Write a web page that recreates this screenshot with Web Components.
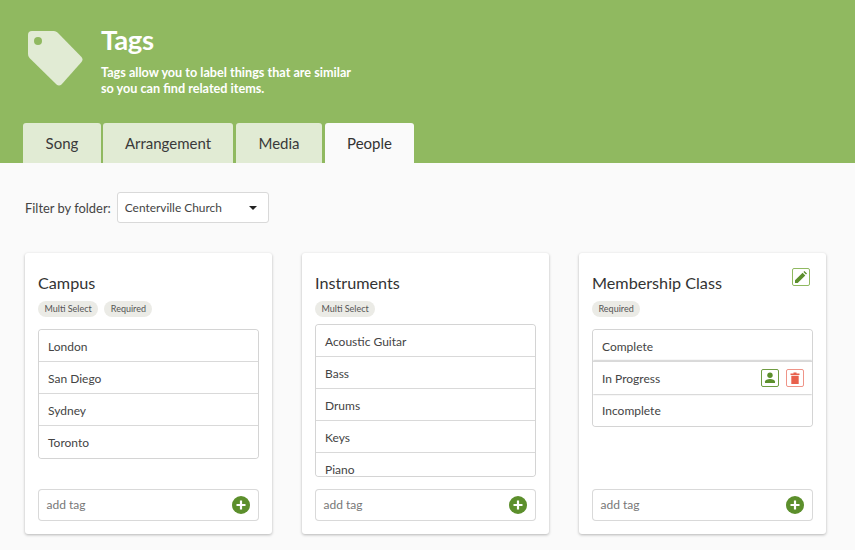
<!DOCTYPE html>
<html>
<head>
<meta charset="utf-8">
<style>
  html, body { margin: 0; padding: 0; height: 550px; overflow: hidden; background: #fafafa; font-family: Lato, sans-serif; color: #333; }
</style>
</head>
<body>
<tags-page></tags-page>
<script>
// Banner com icone, titulo e abas
class TagsHeader extends HTMLElement {
  constructor() {
    super();
    this.shadow = this.attachShadow({ mode: 'open' });
  }
  connectedCallback() {
    this.shadow.innerHTML = `
      <style>
        :host { display: block; height: 163px; background: #90b960; box-sizing: border-box; padding: 24px 0 0 23px; }
        .top { display: flex; height: 99px; align-items: flex-start; }
        svg { width: 55px; height: 55px; margin: 7px 0 0 5px; flex: none; }
        .text { margin-left: 18px; color: #fff; }
        h1 { margin: 0; font-size: 27.5px; line-height: 32px; font-weight: 700; letter-spacing: -.3px; }
        p { margin: 9px 0 0; font-size: 12.65px; line-height: 15.7px; font-weight: 700; }
        .tabs { display: flex; }
        tag-tab + tag-tab { margin-left: 3px; }
        tag-tab:nth-child(2) { margin-left: 2px; }
      </style>
      <div class="top">
        <svg viewBox="0 0 55 55"><path fill="#e1ebd4" d="M4 0H26Q28 0 29.5 1.5L53.5 26Q55.5 28.5 53.5 31L33.5 53.5Q31 55.5 28.5 53.5L1.5 27Q0 25.5 0 23V4Q0 0 4 0z"/><circle cx="10" cy="10" r="4" fill="#90b960"/></svg>
        <div class="text">
          <h1>Tags</h1>
          <p>Tags allow you to label things that are similar<br>so you can find related items.</p>
        </div>
      </div>
      <div class="tabs">
        <tag-tab style="width:78px">Song</tag-tab>
        <tag-tab style="width:130px">Arrangement</tag-tab>
        <tag-tab style="width:86px">Media</tag-tab>
        <tag-tab active style="width:89px">People</tag-tab>
      </div>`;
  }
}

class TagTab extends HTMLElement {
  constructor() {
    super();
    this.attachShadow({ mode: 'open' }).innerHTML = `
      <style>
        :host { display: flex; height: 40px; align-items: center; justify-content: center; background: #e1ebd4; color: #3a3a3a; border-radius: 3px 3px 0 0; font-size: 15px; }
        :host([active]) { background: #fafafa; color: #333; }
      </style>
      <slot></slot>`;
  }
}

class FolderFilter extends HTMLElement {
  constructor() {
    super();
    this.attachShadow({ mode: 'open' }).innerHTML = `
      <style>
        :host { display: flex; align-items: center; height: 31px; font-size: 12.9px; color: #444; }
        .select { margin-left: 6px; width: 152px; height: 31px; box-sizing: border-box; background: #fff; border: 1px solid #d9d9d9; border-radius: 3px; display: flex; align-items: center; justify-content: space-between; padding: 0 11px 0 7px; font-size: 11.9px; }
        i { width: 0; height: 0; border: 4px solid transparent; border-top-color: #222; border-bottom: 0; }
      </style>
      <span>Filter by folder:</span>
      <div class="select"><span>Centerville Church</span><i></i></div>`;
  }
}

// Cartao de um grupo de tags
class TagCard extends HTMLElement {
  constructor() {
    super();
    this.shadow = this.attachShadow({ mode: 'open' });
  }
  connectedCallback() {
    const badges = (this.getAttribute('badges') || '').split(',').map(b => `<span class="badge">${b}</span>`).join('');
    const gap = this.getAttribute('list-gap') || '13';
    const edit = this.hasAttribute('editable') ? `
      <span class="edit"><svg viewBox="0 0 12 12" width="12" height="12"><path fill="#5c8f2c" d="M0 12V9.3L7.6 1.7l2.7 2.7L2.7 12zM8.4 1l1-1 2.6 2.6-1 1z"/></svg></span>` : '';
    this.shadow.innerHTML = `
      <style>
        :host { display: flex; flex-direction: column; box-sizing: border-box; width: 246.5px; height: 281px; background: #fff; border-radius: 3px; box-shadow: 0 1px 3px rgba(0,0,0,.28); padding: 19px 14px 14px 14px; position: relative; }
        h2 { margin: 0 0 0 -1px; font-size: 16.2px; line-height: 22px; font-weight: 400; color: #333; }
        .badges { display: flex; gap: 6px; margin-top: 7px; height: 16px; margin-left: -1px; }
        .badge { background: #ebebe6; color: #555; font-size: 9px; line-height: 16px; padding: 0 6.5px; border-radius: 8px; }
        .list { margin-top: ${gap}px; flex: none; max-height: 151px; overflow: hidden; border-radius: 3px; box-shadow: 0 0 0 1px #d4d4d4; }
        .add { margin-top: auto; height: 30px; border-radius: 3px; box-shadow: 0 0 0 1px #d9d9d9; display: flex; align-items: center; justify-content: space-between; padding: 0 8px 0 7.5px; font-size: 12px; color: #777; }
        .add span { margin-bottom: 1px; }
        .add svg { display: block; }
        .edit { position: absolute; top: 15px; right: 15.5px; width: 16px; height: 16px; border: 1px solid #90b960; border-radius: 2px; display: flex; align-items: center; justify-content: center; }
      </style>
      <h2>${this.getAttribute('title')}</h2>
      ${edit}
      <div class="badges">${badges}</div>
      <div class="list"><slot></slot></div>
      <div class="add"><span>add tag</span>
        <svg width="18" height="18" viewBox="0 0 18 18"><circle cx="9" cy="9" r="9" fill="#5c8f2c"/><path stroke="#fff" stroke-width="2.2" d="M9 4.5v9M4.5 9h9"/></svg>
      </div>`;
  }
}

class TagItem extends HTMLElement {
  constructor() {
    super();
    this.shadow = this.attachShadow({ mode: 'open' });
  }
  connectedCallback() {
    const actions = this.hasAttribute('hover') ? `
      <span class="acts">
        <span class="btn g"><svg width="12" height="12" viewBox="0 0 12 12"><circle cx="6" cy="3.2" r="2.7" fill="#5c8f2c"/><path fill="#5c8f2c" d="M1 11V9.6C1 8 3.5 7 6 7s5 1 5 2.6V11z"/></svg></span>
        <span class="btn r"><svg width="12" height="12" viewBox="0 0 12 12"><path fill="#e8604c" d="M1.5 1.5H4.5V.5h3v1h3v1.4h-9zM2.3 3.7h7.4V12H2.3z"/></svg></span>
      </span>` : '';
    this.shadow.innerHTML = `
      <style>
        :host { display: flex; align-items: center; justify-content: space-between; height: 33px; box-sizing: border-box; padding: 0 8px 0 9px; font-size: 12px; color: #444; background: #fff; border-top: 1px solid #d9d9d9; margin-top: -1px; }
        :host([hover]) { box-shadow: 0 0 2px rgba(0,0,0,.45); position: relative; }
        .acts { display: flex; gap: 7px; }
        .btn { width: 18px; height: 18px; border-radius: 2px; display: flex; align-items: center; justify-content: center; box-sizing: border-box; }
        .g { border: 1px solid #6f9c42; }
        .r { border: 1px solid #ef9488; }
      </style>
      <slot></slot>${actions}`;
  }
}

class TagsPage extends HTMLElement {
  constructor() {
    super();
    this.attachShadow({ mode: 'open' }).innerHTML = `
      <style>
        :host { display: block; }
        .body { padding: 29px 25px 0; }
        .cards { display: flex; gap: 30.5px; margin-top: 30px; }
      </style>
      <tags-header></tags-header>
      <div class="body">
        <folder-filter></folder-filter>
        <div class="cards">
          <tag-card title="Campus" badges="Multi Select,Required">
            <tag-item>London</tag-item><tag-item>San Diego</tag-item><tag-item>Sydney</tag-item><tag-item>Toronto</tag-item>
          </tag-card>
          <tag-card title="Instruments" badges="Multi Select" list-gap="8">
            <tag-item>Acoustic Guitar</tag-item><tag-item>Bass</tag-item><tag-item>Drums</tag-item><tag-item>Keys</tag-item><tag-item>Piano</tag-item>
          </tag-card>
          <tag-card title="Membership Class" badges="Required" editable>
            <tag-item>Complete</tag-item><tag-item hover>In Progress</tag-item><tag-item>Incomplete</tag-item>
          </tag-card>
        </div>
      </div>`;
  }
}

customElements.define('tag-tab', TagTab);
customElements.define('tag-item', TagItem);
customElements.define('tag-card', TagCard);
customElements.define('folder-filter', FolderFilter);
customElements.define('tags-header', TagsHeader);
customElements.define('tags-page', TagsPage);
</script>
</body>
</html>
